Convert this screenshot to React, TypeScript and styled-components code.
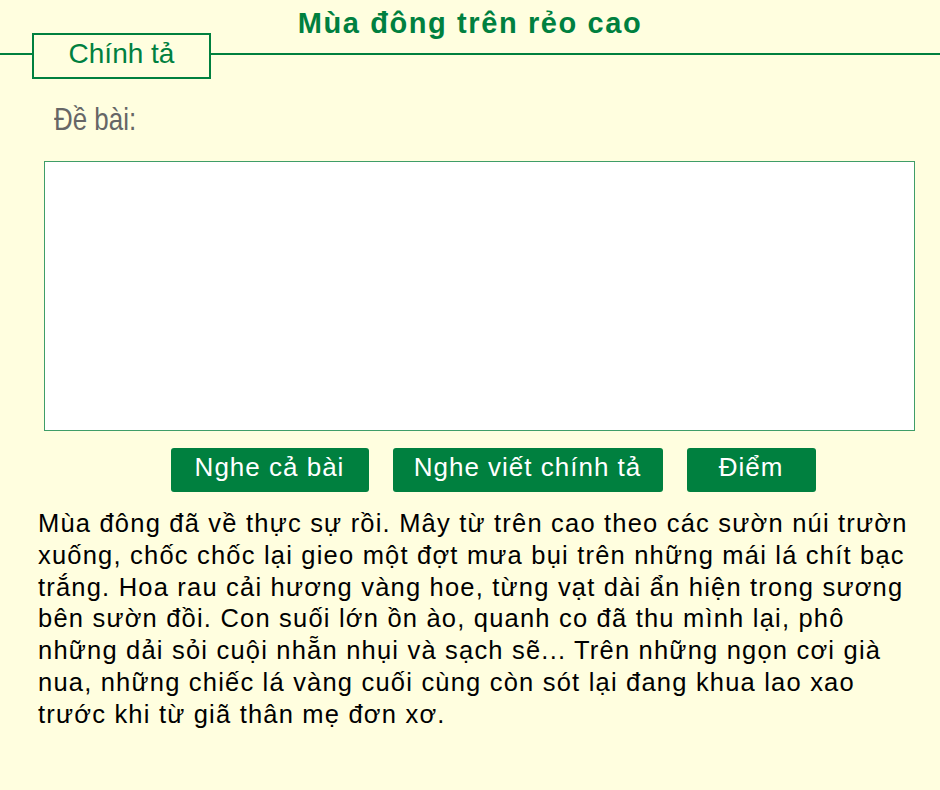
import React from "react";
import styled, { createGlobalStyle } from "styled-components";

const GREEN = "#00803f";

const Global = createGlobalStyle`
  html, body {
    margin: 0;
    padding: 0;
    background: #fffedf;
  }
  body {
    font-family: "Liberation Sans", Arial, sans-serif;
    width: 940px;
    min-height: 790px;
    overflow: hidden;
  }
`;

const Page = styled.div`
  width: 940px;
  min-height: 790px;
  background: #fffedf;
  display: flex;
  flex-direction: column;
`;

const Header = styled.header`
  display: grid;
  grid-template-areas: "stack";
`;

const Title = styled.h1`
  grid-area: stack;
  margin: 0;
  padding-top: 7px;
  text-align: center;
  font-size: 29px;
  line-height: 32px;
  font-weight: bold;
  letter-spacing: 1.6px;
  color: ${GREEN};
`;

const TabRow = styled.div`
  grid-area: stack;
  margin-top: 33px;
  display: flex;
  align-items: flex-start;
`;

const Rule = styled.div<{ $grow?: boolean }>`
  flex: ${(p) => (p.$grow ? "1 1 auto" : "0 0 32px")};
  margin-top: 20px;
  border-top: 2px solid ${GREEN};
`;

const Tab = styled.div`
  box-sizing: border-box;
  width: 179px;
  height: 46px;
  border: 2px solid ${GREEN};
  display: flex;
  align-items: center;
  justify-content: center;
  padding-bottom: 4px;
  font-size: 28px;
  color: ${GREEN};
  background: #fffedf;
`;

const Label = styled.div`
  margin: 21px 0 0 54px;
  font-size: 32px;
  line-height: 38px;
  color: #666666;
  transform: scaleX(0.81);
  transform-origin: left center;
`;

const Answer = styled.textarea`
  box-sizing: border-box;
  display: block;
  margin: 23px 0 0 44px;
  width: 871px;
  height: 270px;
  border: 1px solid #3f9d68;
  background: #ffffff;
  resize: none;
  outline: none;
  padding: 4px;
  font-family: "Liberation Sans", Arial, sans-serif;
  font-size: 24px;
`;

const Buttons = styled.div`
  display: flex;
  justify-content: center;
  gap: 24px;
  padding-left: 46px;
  margin-top: 17px;
`;

const Button = styled.button<{ $w: number }>`
  box-sizing: border-box;
  width: ${(p) => p.$w}px;
  height: 44px;
  border: none;
  border-radius: 3px;
  background: ${GREEN};
  color: #ffffff;
  font-family: "Liberation Sans", Arial, sans-serif;
  font-size: 26px;
  letter-spacing: 1px;
  line-height: 38px;
  padding: 0 0 6px;
  cursor: pointer;
`;

const Passage = styled.p`
  margin: 16px 0 0 38px;
  width: 880px;
  font-size: 25.5px;
  line-height: 31.8px;
  letter-spacing: 1.2px;
  color: #000000;
`;

export default function App() {
  return (
    <Page>
      <Global />
      <Header>
        <Title>Mùa đông trên rẻo cao</Title>
        <TabRow>
          <Rule />
          <Tab>Chính tả</Tab>
          <Rule $grow />
        </TabRow>
      </Header>
      <Label>Đề bài:</Label>
      <Answer aria-label="Bài viết" />
      <Buttons>
        <Button $w={198}>Nghe cả bài</Button>
        <Button $w={270}>Nghe viết chính tả</Button>
        <Button $w={129}>Điểm</Button>
      </Buttons>
      <Passage>
        Mùa đông đã về thực sự rồi. Mây từ trên cao theo các sườn núi trườn
        xuống, chốc chốc lại gieo một đợt mưa bụi trên những mái lá chít bạc
        trắng. Hoa rau cải hương vàng hoe, từng vạt dài ẩn hiện trong sương
        bên sườn đồi. Con suối lớn ồn ào, quanh co đã thu mình lại, phô những
        dải sỏi cuội nhẵn nhụi và sạch sẽ... Trên những ngọn cơi già nua, những
        chiếc lá vàng cuối cùng còn sót lại đang khua lao xao trước khi từ giã
        thân mẹ đơn xơ.
      </Passage>
    </Page>
  );
}
